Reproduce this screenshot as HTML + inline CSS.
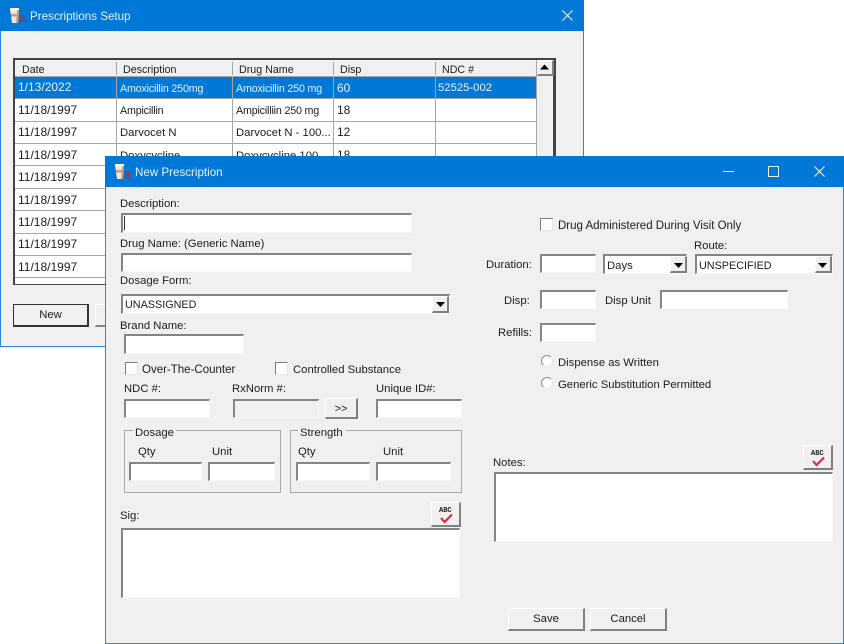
<!DOCTYPE html>
<html><head><meta charset="utf-8">
<style>
html,body{margin:0;padding:0;background:#fff}
#r{position:relative;width:844px;height:644px;overflow:hidden;background:#fff;font:11.3px "Liberation Sans",sans-serif;color:#1c1c1c;filter:blur(.3px)}
#r div,#r svg{position:absolute;box-sizing:border-box}
.t{white-space:nowrap;line-height:14px;height:14px;margin-top:1px}
.w{color:#e8f1fa}
.g{font-size:10.7px}
.n{letter-spacing:-.17px}
.u{font-size:10.8px}
.d{font-size:12px;margin-top:0}
.l{font-size:11.5px}
.in{background:#fff;border-style:solid;border-width:2px 1px 1px 2px;border-color:#858585 #f8f8f8 #f8f8f8 #858585}
.btn{background:#f0f0f0;border-style:solid;border-width:1px 2px 2px 1px;border-color:#fff #808080 #808080 #fff;text-align:center}
.cb{width:13px;height:13px;background:#fff;border-style:solid;border-width:1px;border-color:#7a7a7a #e4e4e4 #e4e4e4 #7a7a7a}
.rd{width:12px;height:12px;border-radius:50%;background:#fff;border:1px solid;border-color:#8a8a8a #e8e8e8 #e8e8e8 #8a8a8a}
.gb{border:1px solid #a8a8a8}
.hl{background:#a6a6a6}
</style></head><body>
<div id="r">
<!-- Window 1 -->
<div style="left:0;top:0;width:584px;height:347px;background:#f0f0f0;border:1px solid #2a86d8"></div>
<div style="left:0;top:0;width:584px;height:31px;background:#0078d7"></div>
<svg style="left:9px;top:7px" width="18" height="17" viewBox="0 0 18 17"><path d="M1 2h9l-1 14H3z" fill="#f3e6d4"/><rect x="1" y="1" width="9" height="2.500" fill="#fafafa"/><rect x="2" y="7" width="7" height="2.500" fill="#d9907a"/><path d="M8 3l-1 13h2l1-13z" fill="#b9a58e"/><text x="10" y="15" font-size="9" font-weight="bold" font-family="Liberation Serif" fill="#c8202a">R</text></svg>
<div class="t w" style="left:30px;top:9px;font-size:11.6px">Prescriptions Setup</div>
<svg style="left:561px;top:9px" width="13" height="13"><path d="M1.5 1.5l10 10M11.5 1.5l-10 10" stroke="#e8f1fa" stroke-width="1.1"/></svg>

<div style="left:13px;top:58px;width:543px;height:227px;background:#fff;border:2px solid #444;border-right-width:3px;border-bottom-width:1px"></div>
<div style="left:15px;top:60px;width:521px;height:17px;background:#f0f0f0"></div>
<div class="t g" style="left:22px;top:62px">Date</div>
<div class="t g" style="left:123px;top:62px">Description</div>
<div class="t g" style="left:239px;top:62px">Drug Name</div>
<div class="t g" style="left:340px;top:62px">Disp</div>
<div class="t g" style="left:442px;top:62px">NDC #</div>
<div class="hl" style="left:116px;top:62px;width:1px;height:13px"></div>
<div class="hl" style="left:232px;top:62px;width:1px;height:13px"></div>
<div class="hl" style="left:333px;top:62px;width:1px;height:13px"></div>
<div class="hl" style="left:435px;top:62px;width:1px;height:13px"></div>

<div style="left:15px;top:77px;width:521px;height:22px;background:#0078d7"></div>
<div class="hl" style="left:15px;top:76px;width:522px;height:1px"></div>
<div class="hl" style="left:15px;top:98px;width:522px;height:1px"></div>
<div class="hl" style="left:15px;top:121px;width:522px;height:1px"></div>
<div class="hl" style="left:15px;top:143px;width:522px;height:1px"></div>
<div class="hl" style="left:15px;top:165px;width:522px;height:1px"></div>
<div class="hl" style="left:15px;top:188px;width:522px;height:1px"></div>
<div class="hl" style="left:15px;top:210px;width:522px;height:1px"></div>
<div class="hl" style="left:15px;top:233px;width:522px;height:1px"></div>
<div class="hl" style="left:15px;top:255px;width:522px;height:1px"></div>
<div class="hl" style="left:15px;top:277px;width:522px;height:1px"></div>
<div class="hl" style="left:116px;top:77px;width:1px;height:207px"></div>
<div class="hl" style="left:232px;top:77px;width:1px;height:207px"></div>
<div class="hl" style="left:333px;top:77px;width:1px;height:207px"></div>
<div class="hl" style="left:435px;top:77px;width:1px;height:207px"></div>
<div class="hl" style="left:536px;top:60px;width:1px;height:224px"></div>
<div style="left:537px;top:60px;width:16px;height:224px;background:#f0f0f0"></div>
<div class="btn" style="left:537px;top:60px;width:17px;height:16px"></div>
<svg style="left:540px;top:64px" width="10" height="6"><path d="M0 5.5L4.500 .5 9 5.500z" fill="#000"/></svg>

<div class="t w d" style="left:18px;top:80px">1/13/2022</div>
<div class="t w g n" style="left:120px;top:81px">Amoxicillin 250mg</div>
<div class="t w g n" style="left:236px;top:81px">Amoxicillin 250 mg</div>
<div class="t w d" style="left:337px;top:81px">60</div>
<div class="t w" style="left:438px;top:80px">52525-002</div>
<div class="t d" style="left:18px;top:103px">11/18/1997</div>
<div class="t g n" style="left:120px;top:103px">Ampicillin</div>
<div class="t g n" style="left:236px;top:103px">Ampicilliin 250 mg</div>
<div class="t d" style="left:337px;top:103px">18</div>
<div class="t d" style="left:18px;top:125px">11/18/1997</div>
<div class="t" style="left:120px;top:125px">Darvocet N</div>
<div class="t" style="left:236px;top:125px">Darvocet N - 100...</div>
<div class="t d" style="left:337px;top:125px">12</div>
<div class="t d" style="left:18px;top:148px">11/18/1997</div>
<div class="t" style="left:120px;top:148px">Doxycycline</div>
<div class="t" style="left:236px;top:148px">Doxycycline 100...</div>
<div class="t d" style="left:337px;top:148px">18</div>
<div class="t d" style="left:18px;top:170px">11/18/1997</div>
<div class="t d" style="left:18px;top:193px">11/18/1997</div>
<div class="t d" style="left:18px;top:215px">11/18/1997</div>
<div class="t d" style="left:18px;top:237px">11/18/1997</div>
<div class="t d" style="left:18px;top:260px">11/18/1997</div>

<div style="left:13px;top:304px;width:76px;height:23px;background:#f0f0f0;border:1px solid #333;border-right-width:2px;border-bottom-width:2px;text-align:center;line-height:21px">New</div>
<div class="btn" style="left:95px;top:304px;width:20px;height:23px"></div>

<!-- Window 2 -->
<div style="left:105px;top:156px;width:739px;height:488px;background:#f0f0f0;border:1px solid #2a86d8"></div>
<div style="left:105px;top:156px;width:739px;height:31px;background:#0078d7"></div>
<svg style="left:114px;top:163px" width="18" height="17" viewBox="0 0 18 17"><path d="M1 2h9l-1 14H3z" fill="#f3e6d4"/><rect x="1" y="1" width="9" height="2.500" fill="#fafafa"/><rect x="2" y="7" width="7" height="2.500" fill="#d9907a"/><path d="M8 3l-1 13h2l1-13z" fill="#b9a58e"/><text x="10" y="15" font-size="9" font-weight="bold" font-family="Liberation Serif" fill="#c8202a">R</text></svg>
<div class="t w" style="left:135px;top:165px;font-size:11.6px">New Prescription</div>
<div style="left:723px;top:171px;width:11px;height:1px;background:#e8f1fa"></div>
<div style="left:768px;top:166px;width:11px;height:11px;border:1px solid #e8f1fa"></div>
<svg style="left:813px;top:165px" width="13" height="13"><path d="M1.5 1.5l10 10M11.5 1.5l-10 10" stroke="#e8f1fa" stroke-width="1.1"/></svg>

<div class="t" style="left:120px;top:196px">Description:</div>
<div class="in" style="left:121px;top:213px;width:291px;height:20px"></div>
<div style="left:124px;top:216px;width:1px;height:14px;background:#333"></div>
<div class="t" style="left:120px;top:236px">Drug Name: (Generic Name)</div>
<div class="in" style="left:121px;top:253px;width:291px;height:19px"></div>
<div class="t" style="left:120px;top:273px">Dosage Form:</div>
<div class="in" style="left:121px;top:294px;width:329px;height:20px"></div>
<div class="t u" style="left:125px;top:297px">UNASSIGNED</div>
<div class="btn" style="left:432px;top:296px;width:17px;height:17px"></div>
<svg style="left:436px;top:302px" width="9" height="5"><path d="M0 0h9L4.500 5z" fill="#000"/></svg>
<div class="t" style="left:120px;top:318px">Brand Name:</div>
<div class="in" style="left:124px;top:334px;width:120px;height:20px"></div>

<div class="cb" style="left:125px;top:362px"></div>
<div class="t l" style="left:142px;top:362px">Over-The-Counter</div>
<div class="cb" style="left:275px;top:362px"></div>
<div class="t" style="left:293px;top:362px">Controlled Substance</div>

<div class="t" style="left:124px;top:381px">NDC #:</div>
<div class="t" style="left:232px;top:381px">RxNorm #:</div>
<div class="t" style="left:376px;top:381px">Unique ID#:</div>
<div class="in" style="left:124px;top:399px;width:86px;height:19px"></div>
<div class="in" style="left:233px;top:399px;width:86px;height:19px;background:#f0f0f0"></div>
<div class="btn" style="left:325px;top:398px;width:33px;height:21px;line-height:20px;font-size:11px">&gt;&gt;</div>
<div class="in" style="left:376px;top:399px;width:86px;height:19px"></div>

<div class="gb" style="left:124px;top:430px;width:157px;height:63px"></div>
<div class="t" style="left:133px;top:425px;background:#f0f0f0;padding:0 2px">Dosage</div>
<div class="t" style="left:138px;top:444px">Qty</div>
<div class="t" style="left:212px;top:444px">Unit</div>
<div class="in" style="left:129px;top:462px;width:73px;height:19px"></div>
<div class="in" style="left:208px;top:462px;width:67px;height:19px"></div>
<div class="gb" style="left:290px;top:430px;width:172px;height:63px"></div>
<div class="t" style="left:298px;top:425px;background:#f0f0f0;padding:0 3px 0 2px">Strength</div>
<div class="t" style="left:298px;top:444px">Qty</div>
<div class="t" style="left:383px;top:444px">Unit</div>
<div class="in" style="left:296px;top:462px;width:74px;height:19px"></div>
<div class="in" style="left:376px;top:462px;width:75px;height:19px"></div>

<div class="t" style="left:120px;top:508px">Sig:</div>
<div class="btn" style="left:431px;top:502px;width:30px;height:25px"></div>
<div class="t" style="left:439px;top:507px;font:bold 7px/7px 'Liberation Mono',monospace;height:7px;color:#222">ABC</div>
<svg style="left:439px;top:513px" width="15" height="11"><path d="M2 5l3.500 4L13 1.500" fill="none" stroke="#e02030" stroke-width="2"/></svg>
<div class="in" style="left:121px;top:528px;width:339px;height:70px"></div>

<!-- right -->
<div class="cb" style="left:540px;top:218px"></div>
<div class="t l" style="left:558px;top:218px">Drug Administered During Visit Only</div>
<div class="t" style="left:694px;top:238px">Route:</div>
<div class="t" style="left:486px;top:257px">Duration:</div>
<div class="in" style="left:540px;top:254px;width:56px;height:19px"></div>
<div class="in" style="left:603px;top:254px;width:84px;height:20px"></div>
<div class="t" style="left:607px;top:258px">Days</div>
<div class="btn" style="left:670px;top:256px;width:17px;height:17px"></div>
<svg style="left:674px;top:263px" width="9" height="5"><path d="M0 0h9L4.500 5z" fill="#000"/></svg>
<div class="in" style="left:695px;top:254px;width:138px;height:20px"></div>
<div class="t u" style="left:699px;top:258px">UNSPECIFIED</div>
<div class="btn" style="left:815px;top:256px;width:17px;height:17px"></div>
<svg style="left:818px;top:263px" width="9" height="5"><path d="M0 0h9L4.500 5z" fill="#000"/></svg>

<div class="t" style="left:504px;top:293px">Disp:</div>
<div class="in" style="left:540px;top:290px;width:56px;height:19px"></div>
<div class="t" style="left:605px;top:293px">Disp Unit</div>
<div class="in" style="left:660px;top:290px;width:128px;height:19px"></div>
<div class="t" style="left:498px;top:325px">Refills:</div>
<div class="in" style="left:540px;top:323px;width:56px;height:19px"></div>
<div class="rd" style="left:541px;top:355px"></div>
<div class="t" style="left:558px;top:355px">Dispense as Written</div>
<div class="rd" style="left:541px;top:377px"></div>
<div class="t" style="left:558px;top:377px">Generic Substitution Permitted</div>

<div class="t" style="left:493px;top:455px">Notes:</div>
<div class="btn" style="left:803px;top:445px;width:30px;height:25px"></div>
<div class="t" style="left:811px;top:450px;font:bold 7px/7px 'Liberation Mono',monospace;height:7px;color:#222">ABC</div>
<svg style="left:811px;top:456px" width="15" height="11"><path d="M2 5l3.500 4L13 1.500" fill="none" stroke="#e02030" stroke-width="2"/></svg>
<div class="in" style="left:494px;top:472px;width:339px;height:70px"></div>

<div class="btn" style="left:508px;top:608px;width:77px;height:23px;line-height:20px">Save</div>
<div class="btn" style="left:590px;top:608px;width:77px;height:23px;line-height:20px">Cancel</div>
</div>
</body></html>
